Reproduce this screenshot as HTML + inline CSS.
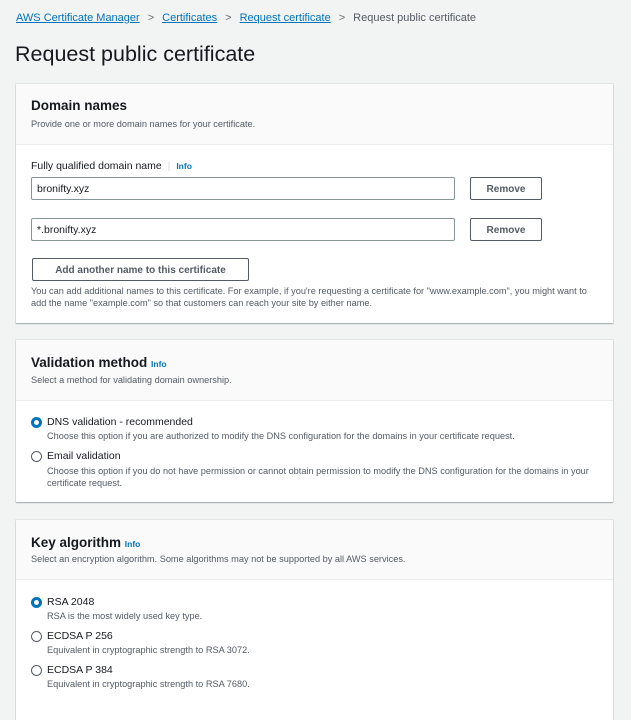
<!DOCTYPE html>
<html><head><style>
*{box-sizing:border-box;margin:0;padding:0}
body{width:631px;height:698px;overflow:hidden;background:#f2f3f3;font-family:"Liberation Sans",sans-serif;color:#16191f;position:relative}
.a{position:absolute;white-space:nowrap}
.bc{left:16px;top:12px;font-size:11px;color:#545b64}
.bc .s{color:#687078;margin:0 8px}
.lk{color:#0073bb;text-decoration:underline}
.card{position:absolute;left:16px;width:597px;background:#fff;box-shadow:0 1px 1px rgba(0,28,36,.3),0 0 0 1px #e4e6e6}
.hd{background:#fafafa;border-bottom:1px solid #eaeded}
.h2{font-size:13.5px;font-weight:bold}
.sm{font-size:9.2px;color:#545b64}
.info{font-size:8.5px;font-weight:bold;color:#0073bb}
.inp{position:absolute;height:23px;border:1px solid #879596;border-radius:2px;font-size:10.5px;padding:5px 5px}
.btn{position:absolute;height:23px;border:1px solid #545b64;border-radius:2px;font-size:10px;font-weight:bold;color:#545b64;text-align:center;line-height:23px}
.rad{position:absolute;width:11px;height:11px;border-radius:50%;border:1px solid #545b64;background:#fff}
.rad.on{border:3px solid #0073bb}
.rl{font-size:10.5px}
</style></head><body>
<div class="a bc"><span class="lk">AWS Certificate Manager</span><span class="s">&gt;</span><span class="lk">Certificates</span><span class="s">&gt;</span><span class="lk">Request certificate</span><span class="s">&gt;</span>Request public certificate</div>
<div class="a" style="left:15px;top:42px;font-size:21.5px">Request public certificate</div>

<div class="card" style="top:84px;height:239px">
 <div class="hd" style="height:61px"></div>
 <div class="a h2" style="left:15px;top:14px">Domain names</div>
 <div class="a sm" style="left:15px;top:35px">Provide one or more domain names for your certificate.</div>
 <div class="a" style="left:15px;top:76px;font-size:10.5px">Fully qualified domain name <span style="color:#d5dbdb;margin:0 3px">|</span> <span class="info">Info</span></div>
 <div class="inp" style="left:15px;top:93px;width:424px">bronifty.xyz</div>
 <div class="btn" style="left:454px;top:93px;width:72px">Remove</div>
 <div class="inp" style="left:15px;top:134px;width:424px">*.bronifty.xyz</div>
 <div class="btn" style="left:454px;top:134px;width:72px">Remove</div>
 <div class="btn" style="left:16px;top:174px;width:217px">Add another name to this certificate</div>
 <div class="a sm" style="left:15px;top:201px;line-height:12px">You can add additional names to this certificate. For example, if you're requesting a certificate for "www.example.com", you might want to<br>add the name "example.com" so that customers can reach your site by either name.</div>
</div>

<div class="card" style="top:340px;height:162px">
 <div class="hd" style="height:61px"></div>
 <div class="a h2" style="left:15px;top:15px">Validation method <span class="info">Info</span></div>
 <div class="a sm" style="left:15px;top:35px">Select a method for validating domain ownership.</div>
 <div class="rad on" style="left:15px;top:77px"></div>
 <div class="a rl" style="left:31px;top:76px">DNS validation - recommended</div>
 <div class="a sm" style="left:31px;top:91px">Choose this option if you are authorized to modify the DNS configuration for the domains in your certificate request.</div>
 <div class="rad" style="left:15px;top:111px"></div>
 <div class="a rl" style="left:31px;top:110px">Email validation</div>
 <div class="a sm" style="left:31px;top:125px;line-height:12px">Choose this option if you do not have permission or cannot obtain permission to modify the DNS configuration for the domains in your<br>certificate request.</div>
</div>

<div class="card" style="top:520px;height:200px">
 <div class="hd" style="height:60px"></div>
 <div class="a h2" style="left:15px;top:15px">Key algorithm <span class="info">Info</span></div>
 <div class="a sm" style="left:15px;top:34px">Select an encryption algorithm. Some algorithms may not be supported by all AWS services.</div>
 <div class="rad on" style="left:15px;top:77px"></div>
 <div class="a rl" style="left:31px;top:76px">RSA 2048</div>
 <div class="a sm" style="left:31px;top:91px">RSA is the most widely used key type.</div>
 <div class="rad" style="left:15px;top:111px"></div>
 <div class="a rl" style="left:31px;top:110px">ECDSA P 256</div>
 <div class="a sm" style="left:31px;top:125px">Equivalent in cryptographic strength to RSA 3072.</div>
 <div class="rad" style="left:15px;top:145px"></div>
 <div class="a rl" style="left:31px;top:144px">ECDSA P 384</div>
 <div class="a sm" style="left:31px;top:159px">Equivalent in cryptographic strength to RSA 7680.</div>
</div>
</body></html>
